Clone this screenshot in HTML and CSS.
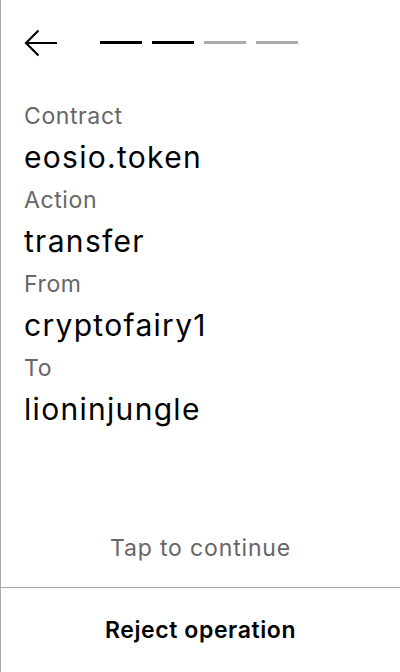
FILE: index.html
```html
<!DOCTYPE html>
<html>
<head>
<meta charset="utf-8">
<link rel="stylesheet" href="styles.css">
</head>
<body>
<div class="screen">
  <div class="header">
    <svg class="back" width="34" height="28" viewBox="0 0 34 28">
      <path d="M33 14 H2 M14.5 1.5 L2 14 L14.5 26.5" fill="none" stroke="#000" stroke-width="2.2"/>
    </svg>
    <div class="steps">
      <span class="step done"></span>
      <span class="step done"></span>
      <span class="step"></span>
      <span class="step"></span>
    </div>
  </div>
  <div class="fields">
    <div class="label">Contract</div>
    <div class="value">eosio.token</div>
    <div class="label">Action</div>
    <div class="value">transfer</div>
    <div class="label">From</div>
    <div class="value">cryptofairy1</div>
    <div class="label">To</div>
    <div class="value">lioninjungle</div>
  </div>
  <div class="tap">Tap to continue</div>
  <div class="footer">Reject operation</div>
</div>
</body>
</html>
```
FILE: styles.css
```css
html, body {
  margin: 0;
  padding: 0;
  background: #fff;
}
body {
  font-family: Inter, "Noto Sans", sans-serif;
  color: #000;
}
.screen {
  width: 400px;
  height: 672px;
  box-sizing: border-box;
  border-left: 1px solid #aaa;
  display: flex;
  flex-direction: column;
}
.header {
  display: flex;
  align-items: center;
  padding: 29px 0 0 23px;
  height: 28px;
}
.back {
  display: block;
}
.steps {
  display: flex;
  gap: 10px;
  margin-left: 42px;
  margin-top: -2px;
}
.step {
  width: 42px;
  height: 3px;
  background: #aaa;
}
.step.done {
  background: #000;
}
.fields {
  padding: 39px 0 0 23px;
}
.label {
  font-size: 23px;
  line-height: 40px;
  height: 40px;
  letter-spacing: 0.6px;
  color: #666;
}
.value {
  font-size: 30px;
  line-height: 43px;
  height: 44px;
  letter-spacing: 1.3px;
}
.tap {
  margin-top: auto;
  text-align: center;
  font-size: 23px;
  line-height: 30px;
  letter-spacing: 0.85px;
  color: #666;
  padding-bottom: 24px;
}
.footer {
  border-top: 1px solid #aaa;
  height: 84px;
  display: flex;
  align-items: center;
  justify-content: center;
  font-size: 23px;
  font-weight: 600;
  letter-spacing: 0.6px;
}
```
